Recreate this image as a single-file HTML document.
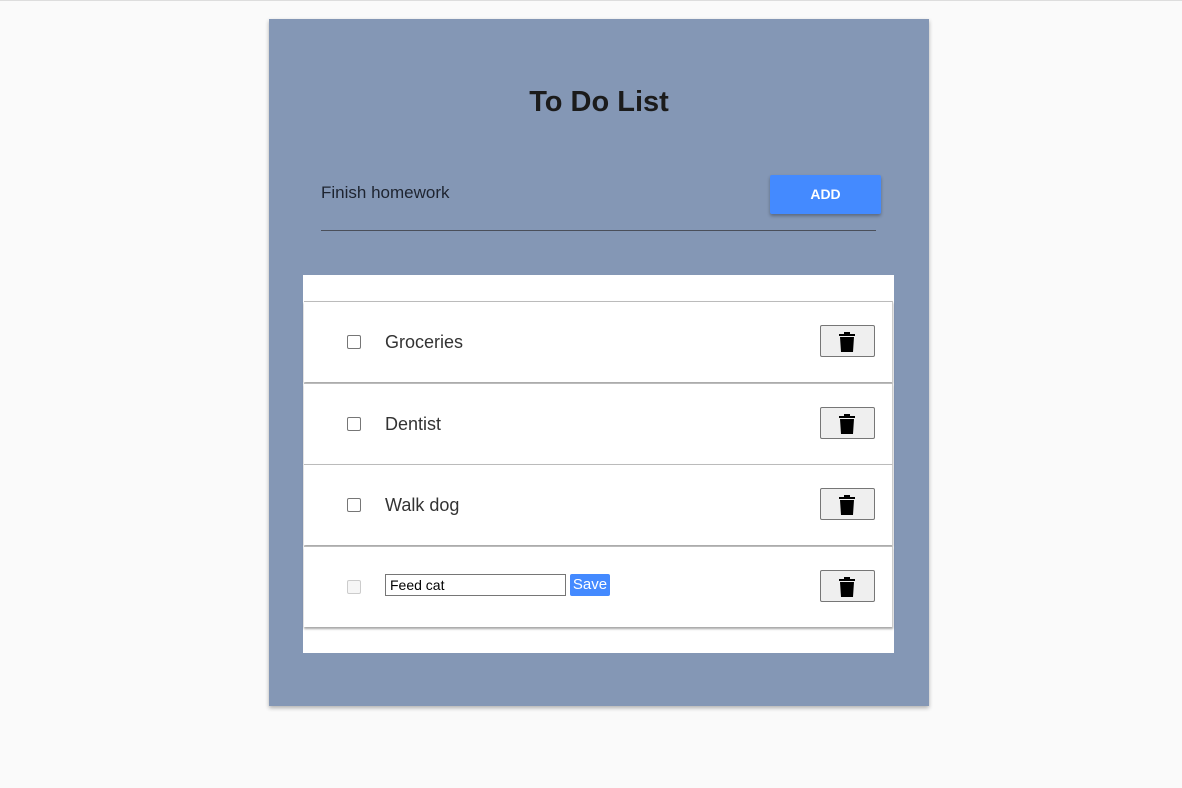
<!DOCTYPE html>
<html><head><style>
body{margin:0;background:#fafafa;font-family:"Liberation Sans",Roboto,sans-serif;width:1182px;height:788px;position:relative;overflow:hidden}
.top{position:absolute;left:0;top:0;width:1182px;height:1px;background:#ddd}
.card{position:absolute;left:269px;top:19px;width:660px;height:687px;background:#8497b5;box-shadow:0 2px 4px rgba(0,0,0,.3)}
h1{position:absolute;left:0;width:660px;top:67px;margin:0;text-align:center;font-size:29px;font-weight:bold;color:#1b1b1b}
.inp{position:absolute;left:52px;top:164px;font-size:17px;color:#1e2430}
.line{position:absolute;left:52px;top:211px;width:555px;height:1px;background:#4a4f5a}
.add{position:absolute;left:501px;top:156px;width:111px;height:39px;background:#448aff;color:#fff;font-weight:bold;font-size:14px;text-align:center;line-height:39px;box-shadow:0 2px 3px rgba(0,0,0,.3);border-radius:2px}
.list{position:absolute;left:34px;top:256px;width:591px;height:378px;background:#fff}
.row{position:absolute;left:1px;width:588px;height:80px;border-top:1px solid #bbb;border-right:1px solid #ccc;box-shadow:0 2px 2px rgba(0,0,0,.35);background:#fff}
.cb{position:absolute;left:43px;top:33px;width:12px;height:12px;border:1px solid #767676;border-radius:2px;background:#fff}
.txt{position:absolute;left:81px;top:30px;font-size:18px;color:#333}
.del{position:absolute;left:516px;top:23px;width:53px;height:30px;border:1px solid #767676;border-radius:2px;background:#efefef}
.del svg{position:absolute;left:18px;top:6px}
.ed{position:absolute;left:81px;top:27px;width:181px;height:22px;border:1px solid #767676;font-size:14px;line-height:20px;padding-left:4px;box-sizing:border-box;color:#000}
.save{position:absolute;left:266px;top:27px;width:40px;height:22px;background:#448aff;color:#fff;font-size:15px;text-align:center;line-height:22px;border-radius:2px}
</style></head><body>
<div class="top"></div>
<div class="card">
<h1>To Do List</h1>
<div class="inp">Finish homework</div>
<div class="line"></div>
<div class="add">ADD</div>
<div class="list">
<div class="row" style="top:26px"><div class="cb"></div><div class="txt">Groceries</div><div class="del"><svg width="16" height="20" viewBox="0 0 16 20"><path d="M5 0h6v2h5v2H0V2h5z M1 5h14l-1 15H2z" fill="#000"/></svg></div></div>
<div class="row" style="top:108px"><div class="cb"></div><div class="txt">Dentist</div><div class="del"><svg width="16" height="20" viewBox="0 0 16 20"><path d="M5 0h6v2h5v2H0V2h5z M1 5h14l-1 15H2z" fill="#000"/></svg></div></div>
<div class="row" style="top:189px"><div class="cb"></div><div class="txt">Walk dog</div><div class="del"><svg width="16" height="20" viewBox="0 0 16 20"><path d="M5 0h6v2h5v2H0V2h5z M1 5h14l-1 15H2z" fill="#000"/></svg></div></div>
<div class="row" style="top:271px"><div class="cb" style="border-color:#ccc;background:#f6f6f6"></div><div class="ed">Feed cat</div><div class="save">Save</div><div class="del"><svg width="16" height="20" viewBox="0 0 16 20"><path d="M5 0h6v2h5v2H0V2h5z M1 5h14l-1 15H2z" fill="#000"/></svg></div></div>
</div>
</div>
</body></html>
